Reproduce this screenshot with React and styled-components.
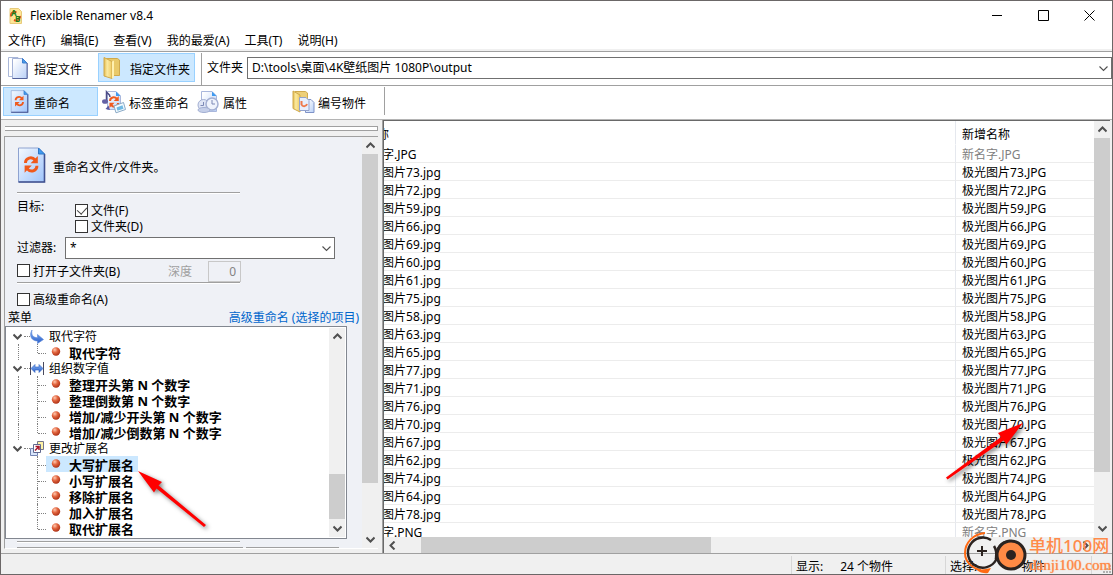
import { useState } from "react"
import styled, { createGlobalStyle } from "styled-components"

const GlobalStyle = createGlobalStyle`
    * {
      box-sizing: border-box;
    }
    body {
      margin: 0;
      background: #f0f0f0;
    }
    body, button, input, select {
      font-family: "Noto Sans", "Noto Sans CJK SC", sans-serif;
      font-size: 12px;
      line-height: 16px;
      color: #000;
    }
    button {
      border: none;
      padding: 0;
      background: none;
    }
`

const Window = styled.div`
    position: relative;
    height: 100vh;
    display: flex;
    flex-direction: column;
    border: 1px solid #6b6767;
    background: #f0f0f0;
    overflow: hidden;
    white-space: nowrap;
`

const TitleBar = styled.header`
    flex: none;
    height: 29px;
    display: flex;
    align-items: center;
    padding-left: 7px;
    background: #fff;
`

const Title = styled.h1`
    flex: 1;
    margin: 0 0 0 6px;
    font-size: 12px;
    font-weight: 400;
`

const WindowButton = styled.button`
    width: 46px;
    height: 29px;
    display: flex;
    align-items: center;
    justify-content: center;
`

const MenuBar = styled.nav`
    flex: none;
    height: 21px;
    display: flex;
    align-items: center;
    gap: 15px;
    padding: 2px 0 0 7px;
    background: #fff;
    border-bottom: 2px solid #f0f0f0;
`

const Toolbar = styled.div`
    flex: none;
    height: 34px;
    display: flex;
    align-items: flex-start;
    padding: 1px 0 0 2px;
    background: #fff;
    border-top: 1px solid #a0a0a0;
`

const ToolButton = styled.button`
    width: ${(p) => p.$width || 95}px;
    height: 29px;
    display: flex;
    align-items: center;
    gap: ${(p) => p.$gap || 6}px;
    padding-left: ${(p) => p.$pad || 4}px;
    border: 1px solid ${(p) => (p.$active ? "#99d1ff" : "transparent")};
    background: ${(p) => (p.$active ? "#cce8ff" : "transparent")};
    span {
      padding-top: 4px;
    }
`

const Divider = styled.div`
    width: 1px;
    height: ${(p) => p.$height}px;
    margin: 0 5px 0 ${(p) => p.$left}px;
    background: #a0a0a0;
`

const PathField = styled.label`
    flex: 1;
    display: flex;
    align-items: center;
    gap: 4px;
    padding-top: 4px;
`

const SelectBox = styled.span`
    position: relative;
    flex: ${(p) => p.$width ? "none" : 1};
    width: ${(p) => p.$width ? p.$width + "px" : "auto"};
    display: flex;
    align-items: center;
    svg {
      position: absolute;
      right: 4px;
      pointer-events: none;
    }
`

const Select = styled.select`
    appearance: none;
    width: 100%;
    height: 22px;
    padding: 0 20px 0 4px;
    border: 1px solid #707070;
    border-radius: 0;
    background: #fff;
`

const Main = styled.main`
    flex: 1;
    min-height: 0;
    display: flex;
    border-top: 1px solid #b4b4b4;
`

const Sidebar = styled.aside`
    flex: none;
    width: 382px;
    display: flex;
    flex-direction: column;
    padding: 6px 4px 4px 3px;
    border-right: 1px solid #a0a0a0;
`

const Gripper = styled.div`
    flex: none;
    height: 5px;
    margin: 0 0 5px 1px;
    border: 1px solid #a0a0a0;
    border-left: none;
    background: #fff;
`

const Panel = styled.div`
    flex: 1;
    min-height: 0;
    display: flex;
    border: 1px solid #a0a0a0;
    border-width: 1px 0 1px 1px;
    border-color: #a0a0a0 #fff #fff #a0a0a0;
    background: #eff1f6;
`

const Form = styled.form`
    flex: 1;
    min-width: 0;
    display: flex;
    flex-direction: column;
`

const FormRow = styled.div`
    flex: none;
    display: flex;
    align-items: ${(p) => p.$align || "center"};
    height: ${(p) => p.$height}px;
    margin-top: ${(p) => p.$top || 0}px;
    padding-left: ${(p) => (p.$flush ? 3 : 12)}px;
`

const Heading = styled.h2`
    margin: 0 0 0 7px;
    padding-top: 6px;
    font-size: 12px;
    font-weight: 400;
`

const Rule = styled.hr`
    flex: none;
    width: 223px;
    height: 2px;
    margin: ${(p) => p.$top || 0}px 0 0 12px;
    border: none;
    border-top: 1px solid #a0a0a0;
    background: #fff;
`

const FieldLabel = styled.label`
    width: ${(p) => p.$width}px;
`

const Targets = styled.div`
    display: flex;
    flex-direction: column;
    padding-top: 4px;
`

const Check = styled.label`
    display: flex;
    align-items: center;
    gap: 3px;
    height: 16px;
`

const CheckInput = styled.input`
    appearance: none;
    position: relative;
    width: 13px;
    height: 13px;
    margin: 0 0 2px;
    border: 1px solid #333;
    background: #fff;
    &:checked::after {
      content: "";
      position: absolute;
      left: 3px;
      top: 0;
      width: 5px;
      height: 8px;
      border: solid #444;
      border-width: 0 1px 1px 0;
      transform: rotate(42deg);
    }
`

const Depth = styled.label`
    display: flex;
    align-items: center;
    gap: 16px;
    margin-left: 48px;
    color: #a0a0a0;
`

const DepthInput = styled.input`
    width: 33px;
    height: 21px;
    padding: 0 4px;
    border: 1px solid #c8c8c8;
    background: #eff1f6;
    color: #838383;
    text-align: right;
`

const AdvancedLink = styled.a`
    margin: 0 3px 0 auto;
    color: #0066cc;
    text-decoration: none;
`

const TreeBox = styled.div`
    flex: 1;
    min-height: 0;
    width: 342px;
    display: flex;
    padding: 1px;
    border: 1px solid #828790;
    background: #fff;
`

const Tree = styled.ul`
    flex: 1;
    margin: 0;
    padding: 0;
    list-style: none;
    overflow: hidden;
    ul {
      margin: 0;
      padding: 0;
      list-style: none;
    }
`

const Branch = styled.div`
    height: 16px;
    display: flex;
    align-items: center;
    padding-left: 6px;
    &::before {
      order: 1;
      content: "";
      width: 6px;
      margin-left: 1px;
      border-top: 1px dotted #808080;
    }
    svg, span {
      order: 2;
    }
    span {
      margin-left: 4px;
      padding-top: 2px;
    }
`

const Expander = styled.button`
    width: 10px;
    height: 16px;
    display: flex;
    align-items: center;
`

const Leaf = styled.li`
    height: 16px;
    display: flex;
    padding-left: 11px;
`

const Trunk = styled.span`
    width: 19px;
    border-left: 1px dotted ${(p) => (p.$open ? "#808080" : "transparent")};
`

const Elbow = styled.span`
    width: 9px;
    height: ${(p) => (p.$last ? 9 : 16)}px;
    border-left: 1px dotted #808080;
    &::after {
      content: "";
      display: block;
      height: 9px;
      border-bottom: 1px dotted #808080;
    }
`

const LeafLabel = styled.button`
    height: 16px;
    display: flex;
    align-items: center;
    gap: 8px;
    padding: 0 4px 0 5px;
    font-size: 13px;
    line-height: 18px;
    font-weight: 700;
    background: ${(p) => (p.$selected ? "#cce8ff" : "transparent")};
    span {
      padding-top: 2px;
    }
`

const PanelFoot = styled.div`
    flex: none;
    height: 9px;
    display: flex;
    flex-direction: column;
    justify-content: space-between;
`

const FootBoxes = styled.div`
    display: flex;
    gap: 3px;
    padding-left: 12px;
    i {
      width: 226px;
      border-top: 1px solid #a0a0a0;
    }
    i + i {
      width: 93px;
    }
`

const Bar = styled.div`
    flex: none;
    display: grid;
    grid-template-${(p) => (p.$horizontal ? "columns" : "rows")}: 17px ${(p) => p.$before}fr ${(p) => p.$size}fr ${(p) => p.$after}fr 17px;
    ${(p) => (p.$horizontal ? "height" : "width")}: 16px;
    margin-bottom: ${(p) => (p.$corner ? 16 : 0)}px;
    background: #f0f0f0;
    button {
      display: flex;
      align-items: center;
      justify-content: center;
    }
`

const Thumb = styled.div`
    background: #cdcdcd;
    ${(p) => (p.$horizontal ? "grid-column" : "grid-row")}: 3;
`

const EndButton = styled.button`
    ${(p) => (p.$horizontal ? "grid-column" : "grid-row")}: 5;
`

const ListPane = styled.section`
    flex: 1;
    min-width: 0;
    display: flex;
    margin-right: 2px;
    border: 1px solid #696969;
    border-width: 1px 0 0 1px;
`

const ListBody = styled.div`
    flex: 1;
    min-width: 0;
    display: flex;
    flex-direction: column;
`

const ListScroll = styled.div`
    flex: 1;
    min-height: 0;
    overflow: hidden;
    background: #fff;
`

const Table = styled.table`
    width: 100%;
    table-layout: fixed;
    border-collapse: separate;
    border-spacing: 0;
    th, td {
      height: 18px;
      padding: 2px 0 0;
      line-height: 15px;
      font-weight: 400;
      text-align: left;
      overflow: hidden;
      border-bottom: 1px solid #ececec;
    }
    th {
      height: 24px;
      padding-top: 4px;
      border-bottom-color: #fff;
    }
    th + th, td + td {
      width: 139px;
      padding-left: 6px;
      border-left: 1px solid #e5e8ee;
    }
`

const Name = styled.td`
    color: ${(p) => (p.$muted ? "#808080" : "#000")};
    text-indent: ${(p) => p.$shift || 0}px;
`

const StatusBar = styled.footer`
    flex: none;
    height: 21px;
    display: flex;
    padding-top: 2px;
    border-top: 1px solid #a0a0a0;
`

const StatusCell = styled.div`
    flex: ${(p) => (p.$width ? "none" : 1)};
    width: ${(p) => (p.$width ? p.$width + "px" : "auto")};
    display: flex;
    align-items: center;
    padding: 3px 0 0 4px;
    gap: ${(p) => p.$gap || 17}px;
    border-right: 1px solid #d7d7d7;
`

const SizeGrip = styled.svg`
    align-self: flex-end;
    margin-left: 10px;
`

const Pointer = styled.svg`
    position: absolute;
    pointer-events: none;
    overflow: visible;
    filter: drop-shadow(2px 2px 2px rgba(0, 0, 0, 0.5));
`

const TreePointer = styled(Pointer)`
    left: 137px;
    top: 470px;
`

const ListPointer = styled(Pointer)`
    right: 88px;
    top: 422px;
`

const Watermark = styled.div`
    position: absolute;
    right: 1px;
    bottom: 0;
    display: flex;
    align-items: center;
    color: #ff8a4a;
`

const WatermarkText = styled.div`
    width: 82px;
    strong, small {
      display: block;
      font-weight: 500;
    }
    strong {
      font-size: 17px;
      line-height: 22px;
      padding-top: 2px;
    }
    small {
      font-family: "Liberation Serif", serif;
      font-size: 15px;
      line-height: 16px;
      text-shadow: 0 0 1px #ff8a4a;
    }
`

const turns = { down: 0, up: 180, left: 90, right: 270 }

const Chevron = ({ dir = "down", thin }) => (
  <svg width="9" height="9" viewBox="0 0 9 9" fill="none" stroke="#505050" strokeWidth={thin ? 1.1 : 2}>
    <path d="M.5 2.5 4.5 6.5 8.5 2.5" transform={`rotate(${turns[dir]} 4.5 4.5)`} />
  </svg>
)

const ScrollBar = ({ horizontal, corner, before, size, after }) => (
  <Bar $horizontal={horizontal} $corner={corner} $before={before} $size={size} $after={after}>
    <button type="button" aria-label="Back"><Chevron dir={horizontal ? "left" : "up"} /></button>
    <Thumb $horizontal={horizontal} />
    <EndButton type="button" aria-label="Forward" $horizontal={horizontal}>
      <Chevron dir={horizontal ? "right" : "down"} />
    </EndButton>
  </Bar>
)

const Gradients = () => (
  <svg width="0" height="0" style={{ position: "absolute" }}>
    <defs>
      <linearGradient id="page" x1="0" y1="0" x2="1" y2="1">
        <stop offset="0.1" stopColor="#ffffff" />
        <stop offset="1" stopColor="#b9d0f7" />
      </linearGradient>
      <linearGradient id="bluePage" x1="0" y1="0" x2="1" y2="1">
        <stop offset="0" stopColor="#f4f9ff" />
        <stop offset="1" stopColor="#9fc4fb" />
      </linearGradient>
      <linearGradient id="gold" x1="0" y1="0" x2="1" y2="0">
        <stop offset="0" stopColor="#e2b94c" />
        <stop offset="0.4" stopColor="#fbeaa0" />
        <stop offset="1" stopColor="#efca62" />
      </linearGradient>
      <radialGradient id="ball" cx="0.35" cy="0.3" r="0.75">
        <stop offset="0" stopColor="#ffc8ae" />
        <stop offset="0.45" stopColor="#e2653f" />
        <stop offset="1" stopColor="#a92d12" />
      </radialGradient>
      <linearGradient id="blue" x1="0" y1="0" x2="0" y2="1">
        <stop offset="0" stopColor="#86b4f5" />
        <stop offset="1" stopColor="#2a5fc9" />
      </linearGradient>
    </defs>
  </svg>
)

const Cycle = () => (
  <g fill="none" stroke="#f0591c" strokeWidth="2.4">
    <path d="M1.2 5.8C1.2 1.5 6.5 0 9.3 3.3" />
    <path d="M10.8 8.2C10.8 12.5 5.5 14 2.7 10.7" />
    <path d="M11.5 0V6H5.5Z" fill="#f0591c" stroke="none" />
    <path d="M.5 14V8H6.5Z" fill="#f0591c" stroke="none" />
  </g>
)

const AppIcon = () => (
  <svg width="16" height="16" viewBox="0 0 16 16">
    <path d="M2 .5H10.5L13.5 3.5V15.5H2Z" fill="#ffe696" stroke="#e6cb7c" />
    <path d="M3 8.5C2.5 4.5 6 3 8.5 4.5M12 8C12.5 11 9.5 13.5 6 12" fill="none" stroke="#e0521f" strokeWidth="2" />
    <text x="3" y="8" fontSize="8" fontWeight="700" fill="#16801a">A</text>
    <text x="7" y="14" fontSize="8" fontWeight="700" fill="#16801a">B</text>
  </svg>
)

const PagesIcon = () => (
  <svg width="20" height="24" viewBox="0 0 20 24" stroke="#7c8dbb">
    <path d="M.5 1.5H10L13.5 5V20.5H.5Z" fill="#fff" stroke="#a9b7d8" />
    <path d="M4.5 2.5H14.5L19 7V22.5H4.5Z" fill="url(#page)" stroke="#a3b1d6" />
    <path d="M14.5 2.5V7H19Z" fill="#4b9be8" stroke="#3c7fd0" />
    <path d="M4.5 22.5H19.2V7" fill="none" stroke="#53619a" />
  </svg>
)

const FolderIcon = () => (
  <svg width="18" height="24" viewBox="0 0 18 24" stroke="#cfa94d">
    <path d="M3 2.5H14.5L16.5 4V19.5H3Z" fill="#e9c969" />
    <path d="M1 1.5 9 5.5V22.5L1 20Z" fill="url(#gold)" />
    <path d="M9 5.5 11 4.5V21.5L9 22.5Z" fill="#fff0b0" stroke="none" />
  </svg>
)

const RenameIcon = ({ width = 19, height = 23 }) => (
  <svg width={width} height={height} viewBox="0 0 28 36">
    <path d="M1 1H21L27 7V35H1Z" fill="url(#bluePage)" stroke="#8ea2d0" />
    <path d="M27 7V35H1" fill="none" stroke="#40508f" strokeWidth="1.6" />
    <path d="M21 1V7H27Z" fill="#3f9af0" stroke="#2f78c8" />
    <g transform="translate(6.5 9) scale(1.2)"><Cycle /></g>
  </svg>
)

const TagIcon = () => (
  <svg width="24" height="24" viewBox="0 0 24 24">
    <path d="M5.5 1.5H14L18.5 6V19.5H5.5Z" fill="url(#page)" stroke="#a9b7dc" />
    <path d="M14 1.5V6H18.5Z" fill="#3f9af0" />
    <g transform="translate(7 6) scale(.85)"><Cycle /></g>
    <path d="M4.5 11V2C6 4 8 4 8 7" fill="none" stroke="#4c4b86" strokeWidth="1.5" />
    <ellipse cx="3" cy="11.5" rx="3" ry="2.3" fill="#6361a5" />
    <path d="M3.5 19 6.5 15.5 8 20Z" fill="#5b59a0" />
    <path d="M12 16 21.5 12.5 23.5 19.5 14 22.8Z" fill="#f4fbff" stroke="#89a9c6" />
    <path d="M14.5 17.5 20.5 15.3 21.5 18.8 15.5 20.8Z" fill="#71b9e3" />
  </svg>
)

const ClockIcon = () => (
  <svg width="22" height="24" viewBox="0 0 22 24">
    <path d="M4.5 1.5H15L19.5 6V21.5H4.5Z" fill="url(#page)" stroke="#a9b7dc" />
    <path d="M15 1.5V6H19.5Z" fill="#3f9af0" />
    <circle cx="6.5" cy="15" r="5.5" fill="#dfe5f5" stroke="#a3afd2" />
    <circle cx="15" cy="14" r="6" fill="#eff3fc" stroke="#a3afd2" strokeWidth="1.5" />
    <path d="M15 10V14H18M6.5 12V15.5H3.5" fill="none" stroke="#7c89b5" />
    <ellipse cx="7" cy="20" rx="6" ry="2.5" fill="#c5cfe9" stroke="#a3afd2" />
  </svg>
)

const NumberIcon = () => (
  <svg width="23" height="24" viewBox="0 0 23 24">
    <path d="M3 1.5H13.5L15.5 3V18.5H3Z" fill="#edcf78" stroke="#cfa94d" />
    <path d="M1 1 8 5V22L1 18.5Z" fill="url(#gold)" stroke="#cfa94d" />
    <path d="M13.5 9.5H19L22 12.5V22.5H13.5Z" fill="url(#page)" stroke="#7f93c8" />
    <path d="M7.5 7.5H14L17 10.5V20.5H7.5Z" fill="#e7effd" stroke="#93a3cd" />
    <path d="M9.5 11V14.5C10.5 17 14 17 15 14" fill="none" stroke="#ee7a4c" strokeWidth="2" />
  </svg>
)

const Bullet = () => (
  <svg width="10" height="10" viewBox="0 0 10 10">
    <circle cx="5" cy="4.5" r="4.2" fill="url(#ball)" />
  </svg>
)

const ReplaceIcon = () => (
  <svg width="15" height="15" viewBox="0 0 15 15">
    <path d="M2 1C1 6 3 8.5 7.5 8.8V5.5L13.5 10.5 7.5 14.5V12C2 12-1.5 7 2 1Z" fill="url(#blue)" stroke="#5b87d8" strokeWidth=".6" />
  </svg>
)

const DigitsIcon = () => (
  <svg width="15" height="15" viewBox="0 0 15 15">
    <path d="M.5 1V14M13.5 1V14" stroke="#4a4a5e" />
    <path d="M1 7.5 5 3.5V6H9V3.5L13 7.5 9 11.5V9H5V11.5Z" fill="url(#blue)" stroke="#2d5fc0" strokeWidth=".6" />
  </svg>
)

const ExtensionIcon = () => (
  <svg width="15" height="15" viewBox="0 0 15 15">
    <path d="M7.5.5H13.5V8.5H7.5Z" fill="#fff3a5" stroke="#75758b" />
    <path d="M.5 7.5H7.5V14.5H.5Z" fill="#d8e5fb" stroke="#7585b3" />
    <path d="M3.5 3.5H10.5V11.5H3.5Z" fill="#fff" stroke="#62698f" />
    <path d="M5 9.5 8.5 6M5.5 5.5H9V9" fill="none" stroke="#a8172b" strokeWidth="1.5" />
  </svg>
)

const menus = ["文件(F)", "编辑(E)", "查看(V)", "我的最爱(A)", "工具(T)", "说明(H)"]

const groups = [
  { title: "取代字符", icon: <ReplaceIcon />, items: ["取代字符"] },
  {
    title: "组织数字值",
    icon: <DigitsIcon />,
    items: ["整理开头第 N 个数字", "整理倒数第 N 个数字", "增加/减少开头第 N 个数字", "增加/减少倒数第 N 个数字"],
  },
  {
    title: "更改扩展名",
    icon: <ExtensionIcon />,
    items: ["大写扩展名", "小写扩展名", "移除扩展名", "加入扩展名", "取代扩展名"],
  },
]

const numbers = [73, 72, 59, 66, 69, 60, 61, 75, 58, 63, 65, 77, 71, 76, 70, 67, 62, 74, 64, 78]

const tools = [
  { name: "重命名", icon: <RenameIcon />, pad: 6, gap: 5 },
  { name: "标签重命名", icon: <TagIcon />, pad: 3, gap: 3 },
  { name: "属性", icon: <ClockIcon />, pad: 3, gap: 4 },
  { name: "编号物件", icon: <NumberIcon />, pad: 3, gap: 3 },
]

const App = () => {
  const [selected, setSelected] = useState("大写扩展名")
  const [mode, setMode] = useState("重命名")

  return (
    <Window>
      <GlobalStyle />
      <Gradients />
      <TitleBar>
        <AppIcon />
        <Title>Flexible Renamer v8.4</Title>
        <WindowButton aria-label="Minimize">
          <svg width="11" height="11" stroke="#000"><path d="M0 5.5H10" /></svg>
        </WindowButton>
        <WindowButton aria-label="Maximize">
          <svg width="11" height="11" stroke="#000" fill="none"><path d="M.5.5H10.5V10.5H.5Z" /></svg>
        </WindowButton>
        <WindowButton aria-label="Close">
          <svg width="11" height="11" stroke="#000"><path d="M.5.5 10.5 10.5M10.5.5.5 10.5" /></svg>
        </WindowButton>
      </TitleBar>
      <MenuBar>
        {menus.map((m) => <button key={m}>{m}</button>)}
      </MenuBar>
      <Toolbar>
        <ToolButton><PagesIcon /><span>指定文件</span></ToolButton>
        <ToolButton $active $width={97} $gap={9}><FolderIcon /><span>指定文件夹</span></ToolButton>
        <Divider $height={32} $left={6} />
        <PathField>
          文件夹
          <SelectBox>
            <Select defaultValue="output">
              <option value="output">D:\tools\桌面\4K壁纸图片 1080P\output</option>
            </Select>
            <Chevron thin />
          </SelectBox>
        </PathField>
      </Toolbar>
      <Toolbar>
        {tools.map((t) => (
          <ToolButton
            key={t.name}
            $active={mode === t.name}
            $pad={t.pad}
            $gap={t.gap}
            onClick={() => setMode(t.name)}
          >
            {t.icon}
            <span>{t.name}</span>
          </ToolButton>
        ))}
        <Divider $height={28} $left={1} />
      </Toolbar>
      <Main>
        <Sidebar>
          <Gripper />
          <Panel>
            <Form>
              <FormRow $height={54} $top={1}>
                <RenameIcon width={29} height={36} />
                <Heading>重命名文件/文件夹。</Heading>
              </FormRow>
              <Rule />
              <FormRow $height={38} $top={5} $align="flex-start">
                <FieldLabel as="span" $width={58}>目标:</FieldLabel>
                <Targets>
                  <Check><CheckInput type="checkbox" defaultChecked />文件(F)</Check>
                  <Check><CheckInput type="checkbox" />文件夹(D)</Check>
                </Targets>
              </FormRow>
              <FormRow $height={22}>
                <FieldLabel htmlFor="filter" $width={48}>过滤器:</FieldLabel>
                <SelectBox $width={270}>
                  <Select id="filter"><option>*</option></Select>
                  <Chevron thin />
                </SelectBox>
              </FormRow>
              <FormRow $height={21} $top={2}>
                <Check><CheckInput type="checkbox" />打开子文件夹(B)</Check>
                <Depth>深度<DepthInput defaultValue="0" disabled /></Depth>
              </FormRow>
              <Rule />
              <FormRow $height={16} $top={8}>
                <Check><CheckInput type="checkbox" />高级重命名(A)</Check>
              </FormRow>
              <FormRow $height={16} $top={2} $flush>
                <span>菜单</span>
                <AdvancedLink href="#advanced">高级重命名 (选择的项目)</AdvancedLink>
              </FormRow>
              <TreeBox>
                <Tree>
                  {groups.map((g, i) => (
                    <li key={g.title}>
                      <Branch>
                        <Expander type="button" aria-label={g.title}><Chevron /></Expander>
                        {g.icon}
                        <span>{g.title}</span>
                      </Branch>
                      <ul>
                        {g.items.map((item, n) => (
                          <Leaf key={item}>
                            <Trunk $open={i < groups.length - 1} />
                            <Elbow $last={n === g.items.length - 1} />
                            <LeafLabel
                              type="button"
                              $selected={i === 2 && item === selected}
                              onClick={() => setSelected(item)}
                            >
                              <Bullet />
                              <span>{item}</span>
                            </LeafLabel>
                          </Leaf>
                        ))}
                      </ul>
                    </li>
                  ))}
                </Tree>
                <ScrollBar before={130} size={45} after={1} />
              </TreeBox>
              <PanelFoot>
                <Rule $top={2} />
                <FootBoxes><i /><i /></FootBoxes>
              </PanelFoot>
            </Form>
            <ScrollBar before={0} size={331} after={48} />
          </Panel>
        </Sidebar>
        <ListPane>
          <ListBody>
            <ListScroll>
              <Table>
                <thead>
                  <tr>
                    <Name as="th" $shift={-7}>称</Name>
                    <th>新增名称</th>
                  </tr>
                </thead>
                <tbody>
                  <tr>
                    <Name $shift={-2}>字.JPG</Name>
                    <Name $muted>新名字.JPG</Name>
                  </tr>
                  {numbers.map((n) => (
                    <tr key={n}>
                      <Name $shift={-2}>图片{n}.jpg</Name>
                      <Name>极光图片{n}.JPG</Name>
                    </tr>
                  ))}
                  <tr>
                    <Name $shift={-2}>字.PNG</Name>
                    <Name $muted>新名字.PNG</Name>
                  </tr>
                </tbody>
              </Table>
            </ListScroll>
            <ScrollBar horizontal before={20} size={290} after={366} />
          </ListBody>
          <ScrollBar corner before={0} size={333} after={48} />
        </ListPane>
      </Main>
      <StatusBar>
        <StatusCell />
        <StatusCell $width={154}><span>显示:</span><span>24 个物件</span></StatusCell>
        <StatusCell $width={146} $gap={44}><span>选择:</span><span>物件</span></StatusCell>
        <SizeGrip width="10" height="10" fill="#b0b0b0">
          <path d="M7 1H9V3H7ZM4 4H6V6H4ZM7 4H9V6H7ZM1 7H3V9H1ZM4 7H6V9H4ZM7 7H9V9H7Z" />
        </SizeGrip>
      </StatusBar>
      <TreePointer width="70" height="58">
        <path d="M0 0 24 11 20.5 14.5 68 54 66 56 18.5 17.5 16 21.5Z" fill="#f00" />
      </TreePointer>
      <ListPointer width="78" height="58">
        <path d="M77 0 52 10 55 14 0 54.5 1.5 56.5 57.5 17.5 60.5 21.5Z" fill="#f00" />
      </ListPointer>
      <Watermark>
        <svg width="65" height="42" viewBox="0 0 65 42" fill="none">
          <path d="M21 1C9 2 1 11 1 21 1 31 10 37 17 38" stroke="#ff6a13" strokeWidth="2" />
          <path d="M10 35C14 38 19 38 27 36L24 41C18 42 13 39 10 35Z" fill="#ff6a13" />
          <path d="M27 8A15 15 0 1 0 32 28C33 22 32 17 30 14" stroke="#2b2320" strokeWidth="2.5" />
          <path d="M32 27C32 16 37 10 46 9" stroke="#2b2320" strokeWidth="2.5" />
          <path d="M18 14V24M13 19H23" stroke="#2b2320" strokeWidth="2" />
          <circle cx="47" cy="23" r="14" fill="#ff8a45" stroke="#2b2320" strokeWidth="3" />
          <circle cx="47" cy="23" r="5" fill="#2b2320" />
        </svg>
        <WatermarkText>
          <strong>单机100网</strong>
          <small>danji100.com</small>
        </WatermarkText>
      </Watermark>
    </Window>
  )
}

export default App
